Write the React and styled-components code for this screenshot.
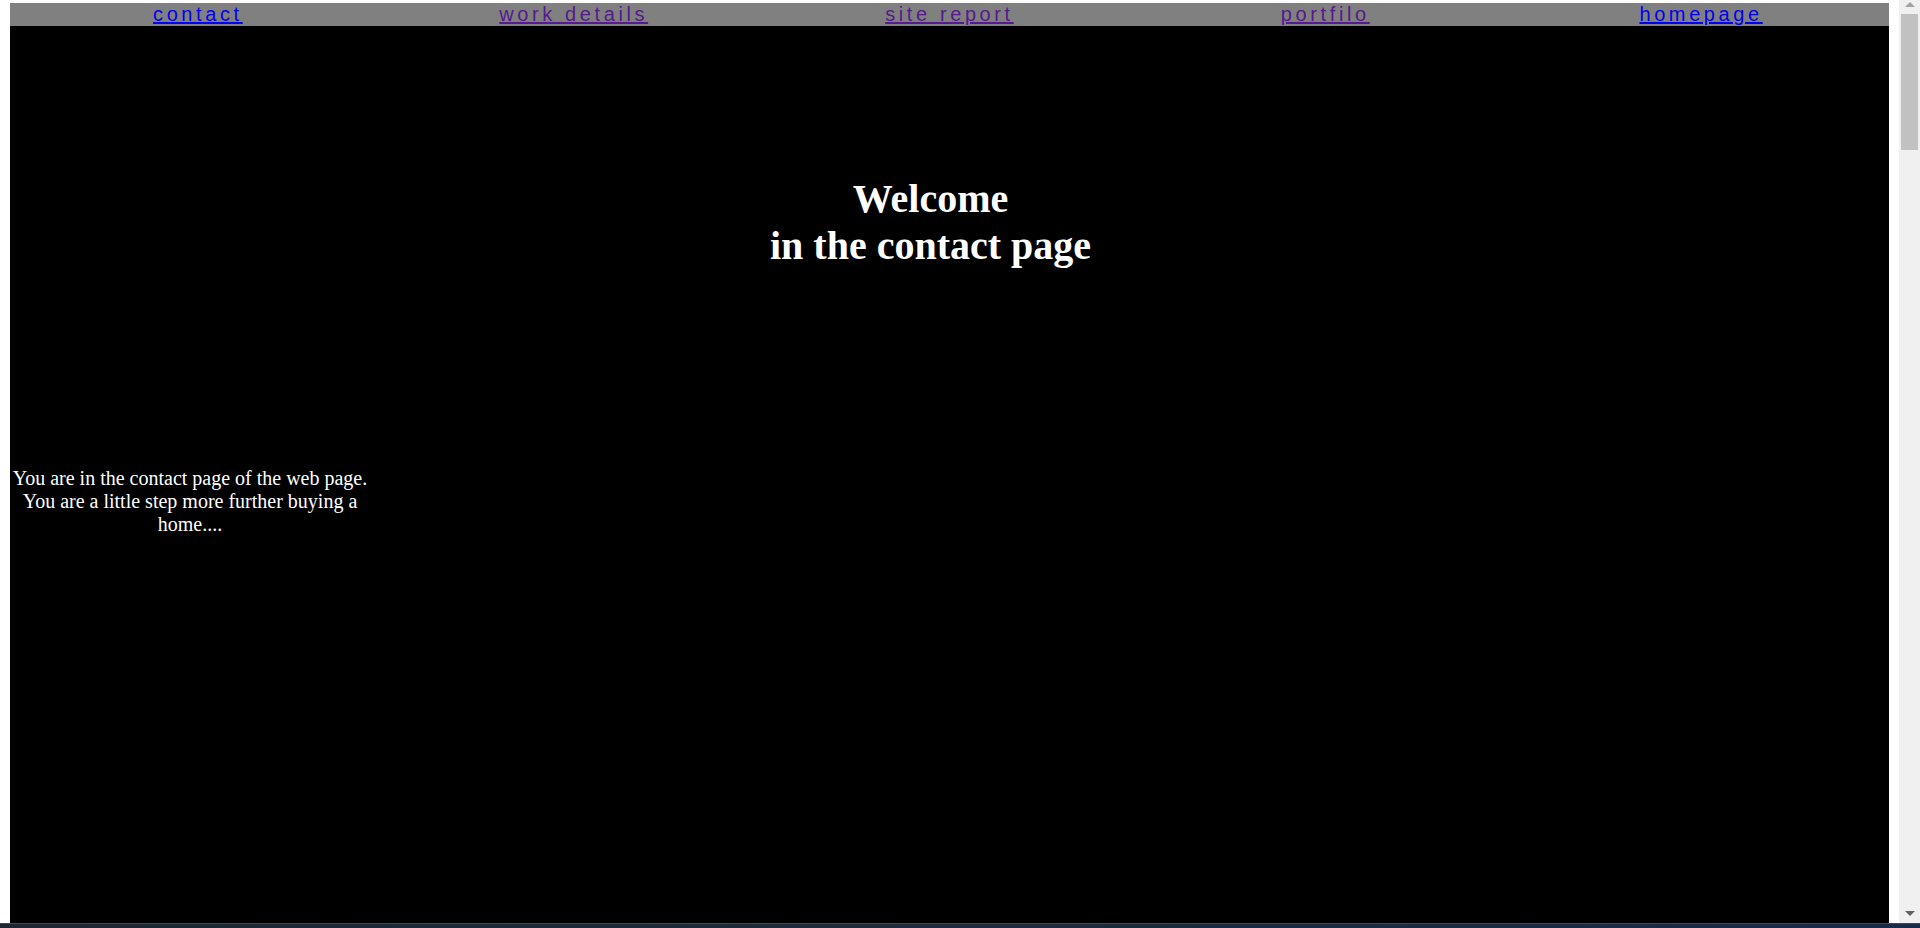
import styled, { createGlobalStyle } from "styled-components";

const GlobalStyle = createGlobalStyle`
  html,
  body {
    height: 100%;
    overflow: hidden;
  }

  body {
    margin: 3px 31px 0 10px;
    background: #ffffff;
    font-family: "Liberation Serif", "Times New Roman", serif;
  }
`;

const Page = styled.div`
  min-height: calc(100vh - 3px);
  background: #000000;
  color: #ffffff;
`;

const Nav = styled.nav`
  display: grid;
  grid-template-columns: repeat(5, 1fr);
  height: 23px;
  background: #808080;
`;

const NavLink = styled.a`
  justify-self: center;
  font-family: "Liberation Sans", Arial, sans-serif;
  font-size: 20px;
  line-height: 23px;
  letter-spacing: 3.6px;
  color: ${({ $visited }) => ($visited ? "#551a8b" : "#0000ee")};
  text-decoration: underline;
`;

const Heading = styled.h1`
  margin: 149px 0 0;
  padding-right: 38px;
  font-size: 40px;
  font-weight: bold;
  line-height: 47px;
  text-align: center;
`;

const Intro = styled.p`
  width: 360px;
  margin: 198px 0 0;
  font-size: 20px;
  line-height: 23px;
  text-align: center;
`;

const Scrollbar = styled.div`
  position: fixed;
  top: 0;
  right: 0;
  bottom: 4px;
  width: 21px;
  display: flex;
  flex-direction: column;
  align-items: center;
  background: #f0f0f0;
`;

const Arrow = styled.div`
  width: 0;
  height: 0;
  border-left: 5px solid transparent;
  border-right: 5px solid transparent;
  ${({ $down }) =>
    $down
      ? "border-top: 5px solid #606060; margin: auto 0 8px;"
      : "border-bottom: 5px solid #a3a3a3; margin: 2px 0 7px;"}
`;

const Thumb = styled.div`
  width: 17px;
  height: 136px;
  background: #c1c1c1;
`;

const Taskbar = styled.div`
  position: fixed;
  left: 0;
  right: 0;
  bottom: 0;
  height: 4px;
  border-top: 1px solid #3b4a63;
  background: linear-gradient(90deg, #1d2733 0%, #1e2b3c 50%, #1a2a4a 100%);
`;

const links = [
  { label: "contact", visited: false },
  { label: "work details", visited: true },
  { label: "site report", visited: true },
  { label: "portfilo", visited: true },
  { label: "homepage", visited: false },
];

export default function App() {
  return (
    <>
      <GlobalStyle />
      <Page>
        <Nav>
          {links.map((link) => (
            <NavLink key={link.label} href="#" $visited={link.visited}>
              {link.label}
            </NavLink>
          ))}
        </Nav>
        <Heading>
          Welcome
          <br />
          in the contact page
        </Heading>
        <Intro>
          You are in the contact page of the web page. You are a little step more
          further buying a home....
        </Intro>
      </Page>
      <Scrollbar>
        <Arrow />
        <Thumb />
        <Arrow $down />
      </Scrollbar>
      <Taskbar />
    </>
  );
}
